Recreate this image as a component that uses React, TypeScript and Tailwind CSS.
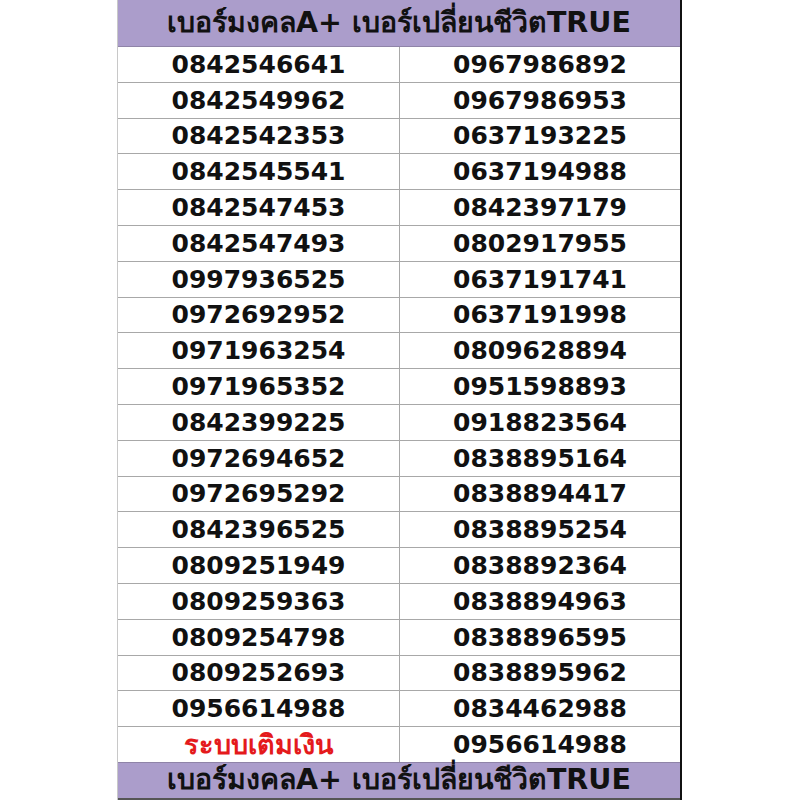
const left = [
  "0842546641", "0842549962", "0842542353", "0842545541", "0842547453",
  "0842547493", "0997936525", "0972692952", "0971963254", "0971965352",
  "0842399225", "0972694652", "0972695292", "0842396525", "0809251949",
  "0809259363", "0809254798", "0809252693", "0956614988",
];
const right = [
  "0967986892", "0967986953", "0637193225", "0637194988", "0842397179",
  "0802917955", "0637191741", "0637191998", "0809628894", "0951598893",
  "0918823564", "0838895164", "0838894417", "0838895254", "0838892364",
  "0838894963", "0838896595", "0838895962", "0834462988", "0956614988",
];

const title = "เบอร์มงคลA+ เบอร์เปลี่ยนชีวิตTRUE";

export default function App() {
  return (
    <div className="w-[800px] h-[800px] bg-white font-['DejaVu_Sans',Tahoma,'Noto_Sans',sans-serif] font-bold text-[#111]">
      <div className="ml-[117px] w-[565px] h-[800px] flex flex-col border-l border-[#c8c8c8] border-r-2 border-r-[#111]">
        <div className="h-[47px] bg-[#ab9dcb] border-b border-[#8f84a8] flex items-center justify-center text-[28.5px] leading-none">
          {title}
        </div>
        <div className="h-[715px] flex flex-col">
          {right.map((r, i) => (
            <div key={i} className="flex-1 grid grid-cols-[282px_1fr] border-b border-[#a8a8a8] last:border-b-0">
              <div className="flex items-center justify-center border-r border-[#a8a8a8] text-[25px] leading-none">
                {i < left.length ? (
                  left[i]
                ) : (
                  <span className="text-[#e41a1c] text-[27px]">ระบบเติมเงิน</span>
                )}
              </div>
              <div className="flex items-center justify-center text-[25px] leading-none">{r}</div>
            </div>
          ))}
        </div>
        <div className="flex-1 bg-[#ab9dcb] border-t border-[#8f84a8] border-b-2 border-b-[#555] flex items-center justify-center text-[28.5px] leading-none">
          {title}
        </div>
      </div>
    </div>
  );
}
